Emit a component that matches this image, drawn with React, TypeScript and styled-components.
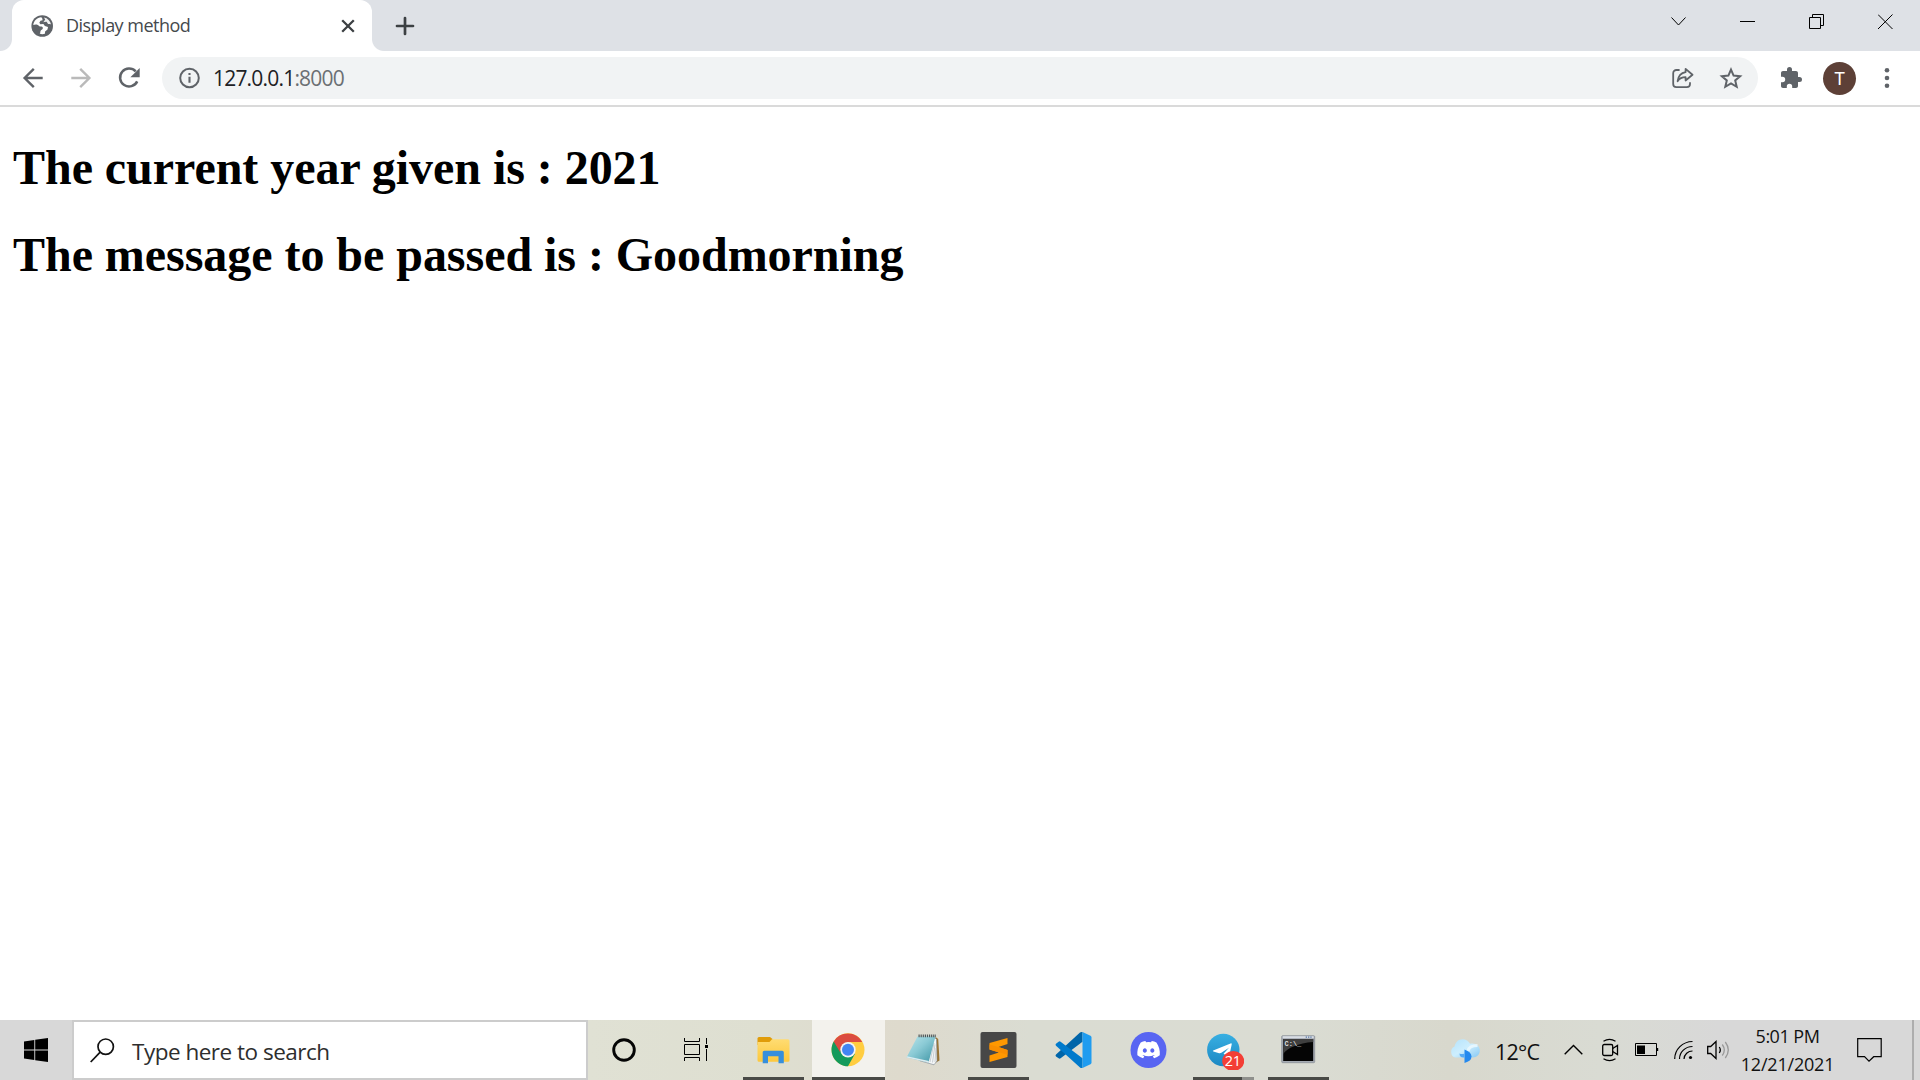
import React from "react";
import styled, { createGlobalStyle } from "styled-components";

const GlobalStyle = createGlobalStyle`
  * { box-sizing: border-box; }
  html, body { margin: 0; padding: 0; background: #fff; overflow: hidden; }
  svg { display: block; flex: none; }
`;

const UI_FONT = `"Segoe UI", "Open Sans", "Noto Sans", sans-serif`;

const Screen = styled.div`
  width: 1920px;
  height: 1080px;
  display: flex;
  flex-direction: column;
  background: #fff;
  font-family: ${UI_FONT};
  overflow: hidden;
`;

/* ---------- tab strip ---------- */
const TabStrip = styled.header`
  height: 51px;
  display: flex;
  justify-content: space-between;
  background: #dee1e6;
`;

const Tabs = styled.div`
  display: flex;
  align-items: stretch;
`;

const TabCurve = styled.span<{ $side: "left" | "right" }>`
  width: 12px;
  background-image: radial-gradient(
    circle at ${(p) => (p.$side === "left" ? "0" : "100%")} 0,
    #dee1e6 11.5px,
    #fff 12.5px
  );
  background-size: 12px 12px;
  background-repeat: no-repeat;
  background-position: 0 100%;
`;

const Tab = styled.div`
  width: 360px;
  display: flex;
  align-items: center;
  padding: 0 17px 0 19px;
  border-radius: 12px 12px 0 0;
  background: #fff;
`;

const TabTitle = styled.span`
  flex: 1;
  margin-left: 11px;
  padding-bottom: 1px;
  font-size: 18px;
  line-height: 24px;
  letter-spacing: -0.52px;
  color: #45494d;
  white-space: nowrap;
`;

const NewTab = styled.div`
  display: flex;
  align-items: center;
  padding-left: 11px;
`;

const WindowControls = styled.div`
  display: flex;
  height: 43px;
  align-items: center;
`;

const WindowControl = styled.span`
  width: 69px;
  display: flex;
  justify-content: center;
`;

/* ---------- toolbar ---------- */
const Toolbar = styled.nav`
  height: 56px;
  display: flex;
  align-items: center;
  padding: 0 18px 0 21px;
  border-bottom: 2px solid #dadada;
`;

const NavButton = styled.span`
  width: 48px;
  display: flex;
`;

const AddressBar = styled.div`
  width: 1596px;
  height: 42px;
  margin-left: -3px;
  display: flex;
  align-items: center;
  padding: 0 15px 0 15px;
  border-radius: 21px;
  background: #f1f3f4;
`;

const Url = styled.span`
  flex: 1;
  margin-left: 11px;
  font-size: 21px;
  line-height: 28px;
  letter-spacing: -0.8px;
  color: #202124;
`;

const Port = styled.span`
  color: #6b6f73;
`;

const AddressActions = styled.div`
  display: flex;
  gap: 24px;
`;

const Avatar = styled.span`
  width: 33px;
  height: 33px;
  margin: 1px 20px 0 20px;
  display: flex;
  align-items: center;
  justify-content: center;
  border-radius: 50%;
  background: #5d4037;
  color: #fff;
  font: 18px/33px "Roboto", sans-serif;
`;

const Extension = styled.span`
  margin-left: 21px;
`;

/* ---------- page ---------- */
const Page = styled.main`
  height: 913px;
  padding: 33px 12px 0 13px;
  overflow: hidden;
`;

const Heading = styled.h1`
  margin: 0 0 32px;
  font-family: "Times New Roman", "Liberation Serif", serif;
  font-size: 48px;
  line-height: 55px;
  font-weight: 700;
  letter-spacing: -0.04px;
  color: #000;
  white-space: nowrap;
`;

/* ---------- taskbar ---------- */
const Taskbar = styled.footer`
  height: 60px;
  display: flex;
  background: linear-gradient(
    90deg,
    #d8d8d8 0,
    #d8d8d8 72px,
    #e0e1d4 588px,
    #dedfd1 760px,
    #dedacd 900px,
    #dadcd2 1030px,
    #dadcd3 1300px,
    #d8d8cd 1450px,
    #d9dbd3 1600px,
    #d8d8d8 1720px,
    #d8d8d8 1920px
  );
`;

const StartButton = styled.div`
  width: 72px;
  display: flex;
  align-items: center;
  justify-content: center;
`;

const SearchBox = styled.div`
  width: 516px;
  display: flex;
  align-items: center;
  padding-left: 16px;
  border: 2px solid #ccc;
  background: #fff;
`;

const SearchText = styled.span`
  margin: 4px 0 0 17px;
  font-size: 22.5px;
  line-height: 30px;
  letter-spacing: -0.5px;
  color: #2e2e2e;
`;

const ShellButton = styled.div<{ $width: number; $inset?: number }>`
  width: ${(p) => p.$width}px;
  display: flex;
  align-items: center;
  justify-content: center;
  padding-right: ${(p) => p.$inset ?? 0}px;
`;

const AppButton = styled.div<{ $active?: boolean }>`
  width: ${(p) => (p.$active ? 73 : 75)}px;
  margin: 0 ${(p) => (p.$active ? 1 : 0)}px;
  display: flex;
  flex-direction: column;
  align-items: center;
  justify-content: space-between;
  padding-top: 10px;
  background: ${(p) => (p.$active ? "#f3f2ed" : "transparent")};
`;

const Underline = styled.span<{ $state: "open" | "active" | "stacked" }>`
  width: ${(p) => (p.$state === "active" ? 73 : 61)}px;
  height: 3px;
  background: ${(p) =>
    p.$state === "stacked"
      ? "linear-gradient(90deg, #494a46 49px, #8f908c 49px)"
      : "#494a46"};
`;

const Tray = styled.div`
  flex: 1;
  display: flex;
  align-items: center;
  padding-left: 114px;
`;

const Temperature = styled.span`
  width: 52px;
  margin: 3px 17px 0 15px;
  font-size: 21.5px;
  line-height: 28px;
  letter-spacing: -0.8px;
  color: #111;
  white-space: nowrap;
`;

const TrayIcon = styled.span<{ $gap: number }>`
  margin-left: ${(p) => p.$gap}px;
`;

const Clock = styled.div`
  width: 105px;
  margin-left: 4px;
  display: flex;
  flex-direction: column;
  align-items: center;
  font-size: 18px;
  line-height: 28px;
  color: #111;
  white-space: nowrap;
`;

const ClockLine = styled.span<{ $tracking: number }>`
  letter-spacing: ${(p) => p.$tracking}px;
`;

const ShowDesktop = styled.div`
  width: 8px;
  border-left: 2px solid #adadad;
`;

/* ---------- browser icons ---------- */
const GlobeIcon = () => (
  <svg width="24" height="24" viewBox="0 0 24 24">
    <circle cx="11.2" cy="12" r="10.8" fill="#5f6368" />
    <path d="M10.3 3.2c-4.2.4-7.7 3.6-8 7.9 1.2-.7 3-.9 4.5-.2 1.4.7 1.5 1.8 3.3 1.5 1.3-.2 2 .9 1.700 2.100-.3 1.400-1.900 1.300-2.300 2.600-.3 1 .1 1.900-.8 2.500 1.100.6 3.500.8 5.200.1l.2-2.300 2.400-1.900.5-2.600-3.100-.9-1.500-2-3 .3-1.100-1.600 1.200-2 2.100-.4-.3-1.700z" fill="#fff" />
    <path d="M13 3.600l1.200 2.200-1.500 1.800.2 1.300 2.500-.1 1.200 1.800h3.500c-.8-3.700-3.500-6.300-7.100-7z" fill="#fff" opacity=".9" />
    <path d="M12.600 8.800l2.700-.2 1.300 2 3 .1" stroke="#5f6368" strokeWidth="1.400" fill="none" />
  </svg>
);
const TabCloseIcon = () => (
  <svg width="14" height="14" viewBox="0 0 14 14" stroke="#3c4043" strokeWidth="2.3">
    <path d="M1.2 1.2l11.6 11.6M12.8 1.2L1.2 12.8" />
  </svg>
);
const PlusIcon = () => (
  <svg width="20" height="20" viewBox="0 0 20 20" stroke="#3c4043" strokeWidth="2.7" strokeLinecap="round">
    <path d="M10 2v16M2 10h16" />
  </svg>
);
const ArrowIcon = ({ forward }: { forward?: boolean }) => (
  <svg width="24" height="24" viewBox="0 0 24 24" fill="none" stroke={forward ? "#bababa" : "#5f6368"} strokeWidth="2.4">
    <path d={forward ? "M2.3 12H20M11.2 2.8L20.4 12l-9.2 9.2" : "M21.7 12H4M12.8 2.8L3.6 12l9.2 9.2"} />
  </svg>
);
const ReloadIcon = () => (
  <svg width="24" height="24" viewBox="0 0 24 24">
    <path d="M18.7 5.4A9 9 0 1 0 20.2 15.4" fill="none" stroke="#5f6368" strokeWidth="2.5" />
    <path d="M22.7 2v9.3h-9.3z" fill="#5f6368" />
  </svg>
);
const InfoIcon = () => (
  <svg width="25" height="24" viewBox="0 0 25 24">
    <circle cx="12.5" cy="12" r="9.3" fill="none" stroke="#5f6368" strokeWidth="2" />
    <path d="M12.5 10.8v6M12.5 6.9v2.1" stroke="#5f6368" strokeWidth="2.1" />
  </svg>
);
const ShareIcon = () => (
  <svg width="24" height="24" viewBox="0 0 24 24" fill="none" stroke="#5f6368" strokeWidth="1.8" strokeLinejoin="round">
    <path d="M8.6 4H5.4A3.2 3.2 0 0 0 2.2 7.200v10.800A3.200 3.200 0 0 0 5.400 21.200h10.400A3.200 3.200 0 0 0 19 18v-1.800" />
    <path d="M14.600 2.900l6.900 5.900-6.900 5.700v-3.300c-3.300 0-6.100 1.100-8 4 .600-4.400 3.200-8.200 8-9z" />
  </svg>
);
const StarIcon = () => (
  <svg width="24" height="24" viewBox="0 0 24 24" fill="none" stroke="#5f6368" strokeWidth="2">
    <path d="M12 3.600l2.600 6 6.500.6-4.900 4.200 1.500 6.400L12 17.400l-5.700 3.400 1.500-6.400-4.900-4.200 6.500-.6z" />
  </svg>
);
const PuzzleIcon = () => (
  <svg width="24" height="24" viewBox="0 0 24 24" fill="#5f6368">
    <path d="M20.500 11H19V7c0-1.100-.9-2-2-2h-4V3.500a2.500 2.500 0 0 0-5 0V5H4c-1.100 0-2 .9-2 2v3.800h1.500a2.700 2.700 0 0 1 0 5.400H2V20c0 1.100.9 2 2 2h3.800v-1.500a2.700 2.700 0 0 1 5.400 0V22H17c1.100 0 2-.9 2-2v-4h1.500a2.500 2.500 0 0 0 0-5z" />
  </svg>
);
const MenuDotsIcon = () => (
  <svg width="6" height="24" viewBox="0 0 6 24" fill="#5f6368">
    <circle cx="3" cy="4.300" r="2.300" /><circle cx="3" cy="12" r="2.300" /><circle cx="3" cy="19.700" r="2.300" />
  </svg>
);
const windowPaths = [
  "M.5 4.500l7 7.500 7-7.500",
  "M0 8.500h15",
  "M.5 4.500h11v11H.5zM3.500 4.500v-3h11v11h-3",
  "M0 1.500l14.500 14.500M14.500 1.500L0 16",
];

/* ---------- taskbar icons ---------- */
const WindowsIcon = () => (
  <svg width="24" height="24" viewBox="0 0 24 24">
    <path d="M0 3.400L10.300 2v9.500H0zM11.200 1.800L24 0v11.500H11.200zM0 12.400h10.300V22L0 20.600zM11.200 12.400H24V24l-12.800-1.800z" />
  </svg>
);
const SearchIcon = () => (
  <svg width="25" height="25" viewBox="0 0 25 25" fill="none" stroke="#111" strokeWidth="1.700">
    <circle cx="15.700" cy="8.700" r="7.700" /><path d="M10.200 14.200L.7 24" />
  </svg>
);
const CortanaIcon = () => (
  <svg width="26" height="26" viewBox="0 0 26 26"><circle cx="13" cy="13" r="10.300" fill="none" stroke="#050505" strokeWidth="2.900" /></svg>
);
const TaskViewIcon = () => (
  <svg width="24" height="24" viewBox="0 0 24 24" fill="none" stroke="#000">
    <path d="M.5 0v3.500h15V0M.5 6.500h15v10H.5zM.5 23v-3.500h15V23M22.500 0v6M22.500 11v12" />
    <path d="M21 7h3v3h-3z" fill="#000" stroke="none" />
  </svg>
);
const FolderIcon = () => (
  <svg width="40" height="40" viewBox="0 0 40 40">
    <defs><linearGradient id="folder" x2="0" y2="1"><stop stopColor="#ffdc72" /><stop offset="1" stopColor="#fcc83d" /></linearGradient></defs>
    <path d="M3.500 8.500Q3.500 7 5 7h11l2.500 2v6h-15z" fill="#e09c09" />
    <path d="M3.500 12h12l2.500-2.800h16q1.500 0 1.500 1.500v19.600q0 1.500-1.500 1.500H5q-1.500 0-1.500-1.500z" fill="url(#folder)" />
    <path d="M8.700 33.300v-11q0-1.600 1.600-1.600h17.900q1.600 0 1.600 1.600v11h-5.300V26.200H14v7.100z" fill="#368fdc" />
  </svg>
);
const ChromeIcon = () => (
  <svg width="40" height="40" viewBox="0 0 40 40">
    <circle cx="19" cy="19.700" r="16.500" fill="#ffcd40" />
    <path d="M19 19.700L4.700 11.500A16.500 16.500 0 0 0 19 36.200l7-12.500z" fill="#149a5b" />
    <path d="M4.700 11.500A16.500 16.500 0 0 1 33.300 12H19l-6 4-2 6z" fill="#db4c40" />
    <circle cx="19" cy="19.700" r="7.700" fill="#f3f3f3" /><circle cx="19" cy="19.700" r="6" fill="#4285f4" />
  </svg>
);
const NotepadIcon = () => (
  <svg width="40" height="40" viewBox="0 0 40 40">
    <defs><linearGradient id="note" x2="1" y2="1"><stop stopColor="#bce6ec" /><stop offset=".45" stopColor="#8acad5" /><stop offset="1" stopColor="#3b93a3" /></linearGradient></defs>
    <path d="M31.500 7l2.700 2 1.300 21.500-4.500 2.500z" fill="#9a7433" />
    <path d="M30.500 7.500l2 2L33 31l-3 3.800-14-4z" fill="#f4f6f7" stroke="#7c8790" strokeWidth=".6" />
    <path d="M30 13l-4 19M31 14.500l-2.500 18M32 18l-1 14" stroke="#b5bdc3" strokeWidth=".7" />
    <path d="M13.500 6.500h18L24.500 32.500 2.500 27.500z" fill="url(#note)" />
    <path d="M2.500 27.500l22 5 .4-1.600L3 26.300z" fill="#dcecf0" />
    <path d="M14.500 5.800h17.500" stroke="#4d5659" strokeWidth="2.800" strokeDasharray="1.200 .9" />
  </svg>
);
const SublimeIcon = () => (
  <svg width="40" height="40" viewBox="0 0 40 40">
    <rect x="1.500" y="2" width="36" height="36" rx="2" fill="#474747" />
    <path d="M10.500 25.400l9.300-3-9.300-3v-6.500L28.500 8v6l-9 3 9 3v7l-18 5z" fill="#ff9800" />
    <path d="M10.500 19.400l18 5.300V20l-9-3-9-2.500z" fill="#f98e00" />
  </svg>
);
const VSCodeIcon = () => (
  <svg width="40" height="40" viewBox="0 0 40 40">
    <path d="M2 26.500q-1-1 0-2L26 2.600q1-.9 2.500-.5v9.600L6.600 28.300q-1 .8-2 0z" fill="#0065a9" />
    <path d="M2 13.700q-1 1 0 2l24 21.700q1 .9 2.500.5v-9.600L6.600 11.700q-1-.8-2 0z" fill="#007acc" />
    <path d="M28.500 2l8 3.800q1 .5 1 1.700v25q0 1.200-1 1.700l-8 3.800z" fill="#1f9cf0" />
  </svg>
);
const DiscordIcon = () => (
  <svg width="40" height="40" viewBox="0 0 40 40">
    <circle cx="19.500" cy="20" r="18" fill="#5865f2" />
    <g transform="translate(8.300 8.300) scale(.94)">
      <path fill="#fff" d="M20.317 4.370a19.790 19.790 0 0 0-4.885-1.515.074.074 0 0 0-.079.037c-.21.375-.444.864-.608 1.250a18.270 18.270 0 0 0-5.487 0 12.640 12.640 0 0 0-.617-1.250.077.077 0 0 0-.079-.037A19.736 19.736 0 0 0 3.677 4.370a.07.07 0 0 0-.032.027C.533 9.046-.32 13.580.099 18.057a.082.082 0 0 0 .031.057 19.900 19.900 0 0 0 5.993 3.030.078.078 0 0 0 .084-.028c.462-.63.874-1.295 1.226-1.994a.076.076 0 0 0-.041-.106 13.107 13.107 0 0 1-1.872-.892.077.077 0 0 1-.008-.128c.126-.094.252-.192.372-.292a.074.074 0 0 1 .077-.01c3.928 1.793 8.180 1.793 12.062 0a.074.074 0 0 1 .078.010c.12.098.246.198.373.292a.077.077 0 0 1-.006.127 12.299 12.299 0 0 1-1.873.892.077.077 0 0 0-.041.107c.36.698.772 1.362 1.225 1.993a.076.076 0 0 0 .084.028 19.839 19.839 0 0 0 6.002-3.030.077.077 0 0 0 .032-.054c.5-5.177-.838-9.674-3.549-13.660a.061.061 0 0 0-.031-.030zM8.020 15.330c-1.183 0-2.157-1.085-2.157-2.419 0-1.333.956-2.419 2.157-2.419 1.210 0 2.176 1.096 2.157 2.420 0 1.333-.956 2.418-2.157 2.418zm7.975 0c-1.183 0-2.157-1.085-2.157-2.419 0-1.333.955-2.419 2.157-2.419 1.210 0 2.176 1.096 2.157 2.420 0 1.333-.946 2.418-2.157 2.418z" />
    </g>
  </svg>
);
const TelegramIcon = () => (
  <svg width="40" height="40" viewBox="0 0 40 40">
    <defs><linearGradient id="tg" x2="0" y2="1"><stop stopColor="#38afe2" /><stop offset="1" stopColor="#1b88c3" /></linearGradient></defs>
    <circle cx="19.300" cy="20" r="16.200" fill="url(#tg)" />
    <path d="M9.200 20.500L26.500 13.400q1.500-.5 1.200 1.200L25 27l-5.500-3.200 5.500-6-7.700 5q-1.300.8-3 .1l-4.900-1.500q-1-.5-.2-.9z" fill="#fff" />
    <ellipse cx="29.200" cy="31" rx="11" ry="10" fill="#f33e35" />
    <text x="28.700" y="36.300" fill="#fff" fontSize="14.500" textAnchor="middle" fontFamily="Open Sans, sans-serif" letterSpacing="-.4">21</text>
  </svg>
);
const TerminalIcon = () => (
  <svg width="40" height="40" viewBox="0 0 40 40">
    <rect x="2.700" y="5.700" width="33" height="27" rx="1" fill="#a5abb3" stroke="#858b93" strokeWidth=".7" />
    <path d="M3.700 7.200h31" stroke="#d8dde4" strokeWidth="2" />
    <path d="M26.700 7.200h6" stroke="#5575a5" strokeWidth="1.200" strokeDasharray="1.300 1" />
    <rect x="4.200" y="9" width="30" height="22" fill="#050505" />
    <path d="M4.200 9h30v3c-15 1-26 6-30 12z" fill="#3f3f3f" />
    <text x="5.500" y="16" fill="#ddd" fontSize="7" fontWeight="700" fontFamily="Liberation Mono, monospace">C:\_</text>
  </svg>
);
const WeatherIcon = () => (
  <svg width="30" height="26" viewBox="0 0 30 26">
    <defs><linearGradient id="cloud" x2="1" y2="1"><stop stopColor="#b4e2fb" /><stop offset=".5" stopColor="#cdeefe" /><stop offset="1" stopColor="#86c8f3" /></linearGradient></defs>
    <path d="M5.500 20.500A5.500 5.800 0 0 1 4.500 9.500C5.500 5 8.500 2.200 12.500 2.200c3.500 0 6 1.800 7.500 4.600 5.500-1.300 9.800 1.900 9.800 6.700 0 4-3 7-7 7z" fill="url(#cloud)" />
    <path d="M18 14q1-5.500 9.500-5.500" stroke="#f1fbff" strokeWidth="3" opacity=".75" fill="none" />
    <path d="M14.500 12.500q7 2.500 7 7t-7 6.500z" fill="#2589ee" /><path d="M14.500 16.500q-2.500 1-5 0 0 4.500 5 4z" fill="#55aaf6" />
  </svg>
);
const ChevronUpIcon = () => (
  <svg width="19" height="12" viewBox="0 0 19 12" fill="none" stroke="#000" strokeWidth="1.400"><path d="M.7 10.300L9.500 1.500l8.800 8.800" /></svg>
);
const MeetIcon = () => (
  <svg width="17" height="24" viewBox="0 0 17 24" fill="none" stroke="#000" strokeWidth="1.300">
    <rect x=".7" y="6.500" width="10" height="11" rx="1.500" /><path d="M10.700 10.500l4.800-3v9l-4.800-3M1.500 3.200q6-3.500 12 0M1.500 20.800q6 3.500 12 0" />
  </svg>
);
const BatteryIcon = () => (
  <svg width="24" height="14" viewBox="0 0 24 14"><path d="M.5.5h21v12H.5z" fill="none" stroke="#000" /><path d="M2 2.500h8v8.500H2zM22 5h1.200v3H22z" /></svg>
);
const WifiIcon = () => (
  <svg width="19" height="20" viewBox="0 0 19 20" fill="none" stroke="#000" strokeWidth="1.200">
    <path d="M.7 19A18 17.500 0 0 1 18.500 1.500M5.500 19A13 12.500 0 0 1 18.500 6.500M10 19A8.500 8.500 0 0 1 18.500 11" /><circle cx="16.500" cy="17.500" r="1.600" fill="#000" stroke="none" />
  </svg>
);
const SpeakerIcon = () => (
  <svg width="24" height="20" viewBox="0 0 24 20" fill="none" stroke="#000" strokeWidth="1.300">
    <path d="M.7 6.500h3L9 1.500v17l-5.300-5h-3zM12.300 7q2 3 0 6" /><path d="M15.300 4.500q4 5.500 0 11M18.300 2q6 8 0 16" stroke="#999" />
  </svg>
);
const NotificationIcon = () => (
  <svg width="25" height="25" viewBox="0 0 25 25" fill="none" stroke="#000" strokeWidth="1.200"><path d="M.7.700h23.500v18h-7.500l-4.700 4.500-4.500-4.500H.7z" /></svg>
);

type AppEntry = {
  name: string;
  Icon: () => React.JSX.Element;
  state?: "open" | "active" | "stacked";
};

const apps: AppEntry[] = [
  { name: "files", Icon: FolderIcon, state: "open" },
  { name: "chrome", Icon: ChromeIcon, state: "active" },
  { name: "notepad", Icon: NotepadIcon },
  { name: "sublime", Icon: SublimeIcon, state: "open" },
  { name: "vscode", Icon: VSCodeIcon },
  { name: "discord", Icon: DiscordIcon },
  { name: "telegram", Icon: TelegramIcon, state: "stacked" },
  { name: "terminal", Icon: TerminalIcon, state: "open" },
];

export default function App() {
  return (
    <Screen>
      <GlobalStyle />
      <TabStrip>
        <Tabs>
          <TabCurve $side="left" />
          <Tab>
            <GlobeIcon />
            <TabTitle>Display method</TabTitle>
            <TabCloseIcon />
          </Tab>
          <TabCurve $side="right" />
          <NewTab><PlusIcon /></NewTab>
        </Tabs>
        <WindowControls>
          {windowPaths.map((d) => (
            <WindowControl key={d}>
              <svg width="16" height="18" viewBox="0 0 16 18" fill="none" stroke="#000" strokeWidth="1">
                <path d={d} />
              </svg>
            </WindowControl>
          ))}
        </WindowControls>
      </TabStrip>
      <Toolbar>
        <NavButton><ArrowIcon /></NavButton>
        <NavButton><ArrowIcon forward /></NavButton>
        <NavButton><ReloadIcon /></NavButton>
        <AddressBar>
          <InfoIcon />
          <Url>127.0.0.1<Port>:8000</Port></Url>
          <AddressActions><ShareIcon /><StarIcon /></AddressActions>
        </AddressBar>
        <Extension><PuzzleIcon /></Extension>
        <Avatar>T</Avatar>
        <TrayIcon $gap={8}><MenuDotsIcon /></TrayIcon>
      </Toolbar>
      <Page>
        <Heading>The current year given is : 2021</Heading>
        <Heading>The message to be passed is : Goodmorning</Heading>
      </Page>
      <Taskbar>
        <StartButton><WindowsIcon /></StartButton>
        <SearchBox>
          <SearchIcon />
          <SearchText>Type here to search</SearchText>
        </SearchBox>
        <ShellButton $width={72}><CortanaIcon /></ShellButton>
        <ShellButton $width={76} $inset={4}><TaskViewIcon /></ShellButton>
        {apps.map(({ name, Icon, state }) => (
          <AppButton key={name} $active={state === "active"}>
            <Icon />
            {state && <Underline $state={state} />}
          </AppButton>
        ))}
        <Tray>
          <WeatherIcon />
          <Temperature>12°C</Temperature>
          <ChevronUpIcon />
          <TrayIcon $gap={19}><MeetIcon /></TrayIcon>
          <TrayIcon $gap={16}><BatteryIcon /></TrayIcon>
          <TrayIcon $gap={15}><WifiIcon /></TrayIcon>
          <TrayIcon $gap={14}><SpeakerIcon /></TrayIcon>
          <Clock>
            <ClockLine $tracking={-0.5}>5:01 PM</ClockLine>
            <ClockLine $tracking={-0.2}>12/21/2021</ClockLine>
          </Clock>
          <TrayIcon $gap={17}><NotificationIcon /></TrayIcon>
        </Tray>
        <ShowDesktop />
      </Taskbar>
    </Screen>
  );
}
